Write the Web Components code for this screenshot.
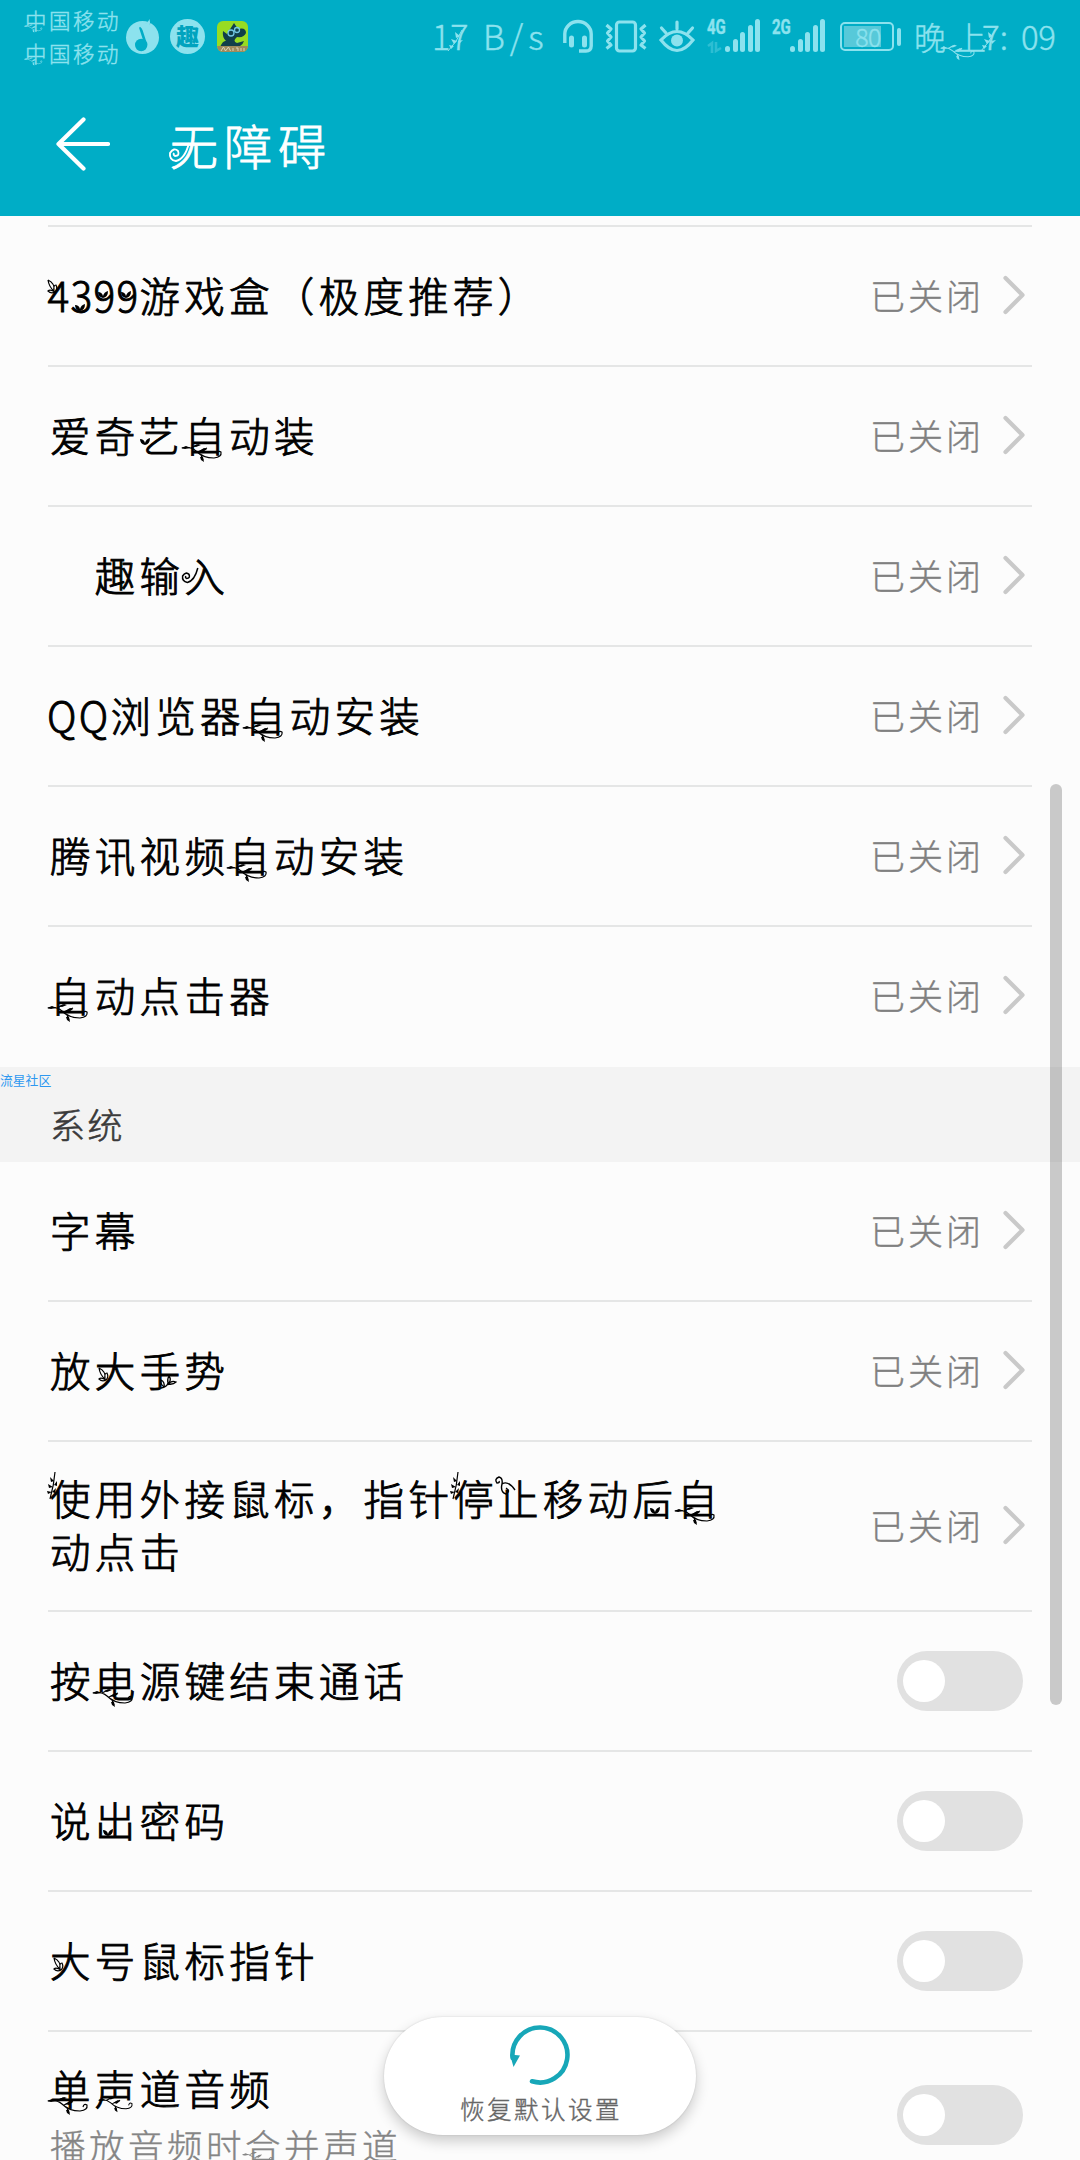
<!DOCTYPE html>
<html lang="zh-CN">
<head>
<meta charset="utf-8">
<title>无障碍</title>
<style>
html,body{margin:0;padding:0;background:#fcfcfc}
body{font-family:"Noto Sans CJK SC","Noto Sans",sans-serif;font-weight:300;width:1080px;height:2160px;overflow:hidden}
</style>
</head>
<body>
<access-page></access-page>
<script>
function define(name, html, setup) {
  const t = document.createElement('template');
  t.innerHTML = html;
  customElements.define(name, class extends HTMLElement {
    constructor() {
      super();
      this.attachShadow({mode: 'open'}).appendChild(t.content.cloneNode(true));
    }
    connectedCallback() { if (setup) setup(this, this.shadowRoot); }
  });
}

/* Small botanical ornaments that hang on single characters. */
const sprigs = {
  vine: ['left:-3px;top:38px;width:42px;height:19px', '0 0 42 19',
    '<path d="M1 5Q9 3 15 8Q22 15 33 15Q41 14 40 9Q37 7 36 11M10 5L16 2M17 9L26 5M20 12L22 17" fill="none" stroke="currentColor" stroke-width="1.200"/><path d="M0 5l5-2 4 2-5 1zM12 3l5-2 3 1-5 2zM18 8l5-3 3 1-4 3zM19 14l3 0 1 5-3-2z" fill="currentColor"/>'],
  leaf: ['left:-1px;top:14px;width:11px;height:15px', '0 0 11 15',
    '<path d="M1 1Q8 4 7 12Q2 8 1 1M7 12Q6 6 9 6Q11 10 8 13Q4 15 1 12Q3 10 8 13" fill="none" stroke="currentColor" stroke-width="1.200"/>'],
  bud: ['left:5px;bottom:14px;width:10px;height:8px', '0 0 10 8',
    '<path d="M5 8Q0 7 0 2Q4 2 5 6Q6 2 10 1Q10 7 5 8" fill="currentColor"/>'],
  fern: ['left:-4px;top:4px;width:12px;height:28px', '0 0 12 28',
    '<path d="M9 0Q8 13 4 27" fill="none" stroke="currentColor" stroke-width="1.200"/><path d="M8 9l-4-4 1 5zM7 15l-5-3 1 4zM6 20l-5-1 1 3zM8 13l3-4 0 5zM6 20l4-4-1 5z" fill="currentColor"/>'],
  curl: ['left:-4px;top:8px;width:22px;height:20px', '0 0 22 20',
    '<path d="M21 14Q14 4 8 8Q6 16 12 18Q17 15 12 12M8 8Q9 2 5 1Q0 3 3 7Q6 7 5 5" fill="none" stroke="currentColor" stroke-width="1.400"/>'],
  swirl: ['left:-2px;top:34px;width:22px;height:20px', '0 0 22 20',
    '<path d="M21 0Q17 16 8 18Q1 17 2 10Q6 4 10 8Q12 13 7 13Q5 12 6 10" fill="none" stroke="currentColor" stroke-width="1.900"/>'],
  branch: ['left:-1px;top:12px;width:15px;height:24px', '0 0 15 24',
    '<path d="M14 2Q9 14 0 23" fill="none" stroke="currentColor" stroke-width="1"/><path d="M12 8l-5-4 1 6zM9 13l-6-2 3 5zM6 18l-5-1 2 4zM10 13l5-1-4 4z" fill="currentColor"/>'],
  twig: ['left:20px;top:35px;width:16px;height:14px', '0 0 16 14',
    '<path d="M1 13Q7 12 8 8Q7 4 9 1Q12 5 8 9Q13 10 16 7Q11 5 8 10M4 12Q0 9 1 5Q5 7 4 12" fill="none" stroke="currentColor" stroke-width="1.300"/>']
};
define('ink-sprig', `<style>:host{position:relative;display:inline}svg{position:absolute;overflow:visible}</style><slot></slot><svg></svg>`, (el, r) => {
  const [css, box, body] = sprigs[el.getAttribute('kind')];
  const s = r.querySelector('svg');
  s.style.cssText = css;
  if (el.hasAttribute('scale')) { s.style.transform = 'scale(' + el.getAttribute('scale') + ')'; s.style.transformOrigin = '0 0'; }
  if (el.hasAttribute('top')) { s.style.bottom = 'auto'; s.style.top = el.getAttribute('top') + 'px'; }
  if (el.hasAttribute('left')) s.style.left = el.getAttribute('left') + 'px';
  s.setAttribute('viewBox', box);
  s.innerHTML = body;
});

define('signal-bars', `<style>
:host{display:flex;align-items:flex-end;gap:2.5px;height:33px}
i{width:5px;border-radius:2.5px;background:currentColor}
</style><i style="height:6px"></i><i style="height:13px"></i><i style="height:20px"></i><i style="height:27px"></i><i style="height:33px"></i>`);

define('battery-meter', `<style>
:host{display:flex;align-items:center;gap:3px}
.b{box-sizing:border-box;width:54px;height:29px;border:2px solid currentColor;border-radius:5px;padding:2px}
.f{width:37px;height:21px;background:rgba(255,255,255,.34);font-size:25px;line-height:20px;text-align:right;letter-spacing:-.5px}
.c{width:4px;height:18px;border-radius:2px;background:currentColor}
</style><div class="b"><div class="f"><slot></slot></div></div><div class="c"></div>`);

define('status-bar', `<style>
:host{display:flex;align-items:flex-start;height:72px;color:#8ce2ee;white-space:nowrap;-webkit-text-stroke:.4px currentColor}
.car{margin:3px 0 0 25px;width:101px;font-size:21.500px;letter-spacing:2.500px;line-height:33px}
svg{flex:none;display:block;overflow:visible}
.t{font-size:34px;line-height:36px;margin-top:18px}
.g{font:bold 20px/16px Roboto,sans-serif;display:flex;flex-direction:column;width:18px;margin-top:19px}
.g span{transform:scaleX(.75);transform-origin:0 0}
.g svg{margin-top:7px;opacity:.32}
</style>
<div class="car"><div><ink-sprig kind="vine" scale=".45" top="20" left="-1">中</ink-sprig>国移动</div><div><ink-sprig kind="vine" scale=".45" top="20" left="-1">中</ink-sprig>国移动</div></div>
<svg style="margin:19px 0 0 0" width="33" height="36" viewBox="0 0 33 36"><circle cx="16.500" cy="18.500" r="16.500" fill="currentColor"/><path d="M24.500 2Q22 6 14.500 9L20 26" fill="none" stroke="#00adc6" stroke-width="2.600" stroke-linejoin="round"/><path d="M13 6.500Q22 5 23.500 0Q26 8 17 11z" fill="currentColor"/><circle cx="15.200" cy="26" r="6.200" fill="#00adc6"/></svg>
<svg style="margin:19px 0 0 11px" width="35" height="35" viewBox="0 0 35 35"><circle cx="17.500" cy="17.500" r="17.500" fill="currentColor"/><text x="17.500" y="26" text-anchor="middle" font-size="23" font-weight="900" stroke="none" fill="#00a3be">趣</text></svg>
<svg style="margin:21px 0 0 12px" width="31" height="31" viewBox="0 0 31 31"><rect width="31" height="31" rx="6" fill="#98dc22"/><path d="M3 26Q6 19 9 20Q5 16 6 10L10 13 17 2 21 8Q29 6 29 12Q27 17 20 16Q15 20 20 22L27 20Q25 26 18 26z" fill="#103f4a"/><g fill="none" stroke="#74c7e3" stroke-width="1.300"><circle cx="14" cy="12" r="3"/><circle cx="20" cy="9" r="2.500"/></g><path d="M0 25H31Q30 31 25 31H6Q1 31 0 25z" fill="#9f8a5c"/><path d="M4 30l2.500-4 2 4 3-4 2 4M16 27v3M19 27h2v3M24 27v3M27 27v3" fill="none" stroke="#e0d8c4" stroke-width=".9"/></svg>
<div class="t" style="margin-left:184px;width:51px"><span>1</span><ink-sprig kind="branch" left="-2" top="17">7</ink-sprig></div>
<div class="t" style="width:80px;letter-spacing:5px">B/s</div>
<svg style="margin:20px 0 0 0" width="30" height="33" viewBox="0 0 30 33" fill="none" stroke="currentColor"><path d="M1.800 23V14A13.200 12.500 0 0 1 28.200 14V26Q28 31 23 31H16" stroke-width="3.400"/><path d="M8.500 18v7M21.500 18v7" stroke-width="5" stroke-linecap="round"/></svg>
<svg style="margin:20px 0 0 12px" width="42" height="33" viewBox="0 0 42 33" fill="none" stroke="currentColor" stroke-width="3.200" stroke-linejoin="round"><rect x="11.500" y="2" width="19" height="29" rx="3"/><path d="M1.500 5l4.500 4-3.500 4 3.500 4-3.500 4 3.500 4-4.500 3.500M40.500 5L36 9l3.500 4-3.500 4 3.500 4-3.500 4 4.500 3.500"/></svg>
<svg style="margin:20px 0 0 12px" width="36" height="33" viewBox="0 0 36 33" fill="none" stroke="currentColor" stroke-width="3.200" stroke-linecap="round"><path d="M2 20Q18 3 34 20Q18 41 2 20zM18 9V2M7 13L2.500 8M29 13L33.500 8"/><circle cx="18" cy="20.500" r="6" fill="currentColor" stroke="none"/></svg>
<div class="g" style="margin-left:12px"><span>4G</span><svg width="15" height="11" viewBox="0 0 15 11" fill="none" stroke="currentColor" stroke-width="2.600"><path d="M1 4l4-3v10M9 0v9l5-3"/></svg></div>
<signal-bars style="margin-top:19px"></signal-bars>
<div class="g" style="margin-left:12px"><span>2G</span></div>
<signal-bars style="margin-top:19px"></signal-bars>
<battery-meter style="margin:22px 0 0 15px">80</battery-meter>
<div class="t" style="margin-left:13px;width:40px;font-size:32px">晚</div>
<div class="t" style="width:28px;font-size:32px"><ink-sprig kind="vine" top="31" left="-14" scale=".85">上</ink-sprig></div>
<div class="t" style="width:39px;font-size:33px"><ink-sprig kind="branch" top="16">7</ink-sprig>:</div>
<div class="t" style="font-size:33px;letter-spacing:-.3px">09</div>`);

define('app-header', `<style>
:host{display:flex;flex-direction:column;height:216px;background:#00adc6;color:#fff}
.bar{display:flex;align-items:center;height:144px}
svg{margin-left:56px}
h1{margin:0 0 0 60px;font-size:48px;font-weight:300;line-height:60px;letter-spacing:6px;-webkit-text-stroke:.9px #fff}
</style><status-bar></status-bar>
<div class="bar"><svg width="54" height="54" viewBox="0 0 54 54" fill="none" stroke="#fff" stroke-width="4.200" stroke-linecap="round" stroke-linejoin="round"><path d="M52 27H2.500M27.500 2.500L2.500 27L27.500 51.500"/></svg><h1><slot></slot></h1></div>`);

define('toggle-switch', `<style>
:host{display:flex;align-items:center;box-sizing:border-box;width:126px;height:60px;border-radius:30px;background:#e1e1e1;padding-left:6px;margin-right:9px}
i{width:42px;height:42px;border-radius:50%;background:#fff}
</style><i></i>`);

define('status-link', `<style>
:host{display:flex;align-items:center;color:#808080;font-size:35px;letter-spacing:3px;line-height:40px;-webkit-text-stroke:.4px currentColor}
span{width:133px;margin-top:-2px}
svg{margin:-2px 7px 0 0}
</style><span>已关闭</span><svg width="22" height="40" viewBox="0 0 22 40" fill="none" stroke="#c9c9c9" stroke-width="4.200" stroke-linecap="round" stroke-linejoin="round"><path d="M2.500 3L19.500 20L2.500 37"/></svg>`);

define('setting-row', `<style>
:host{display:flex;align-items:center;justify-content:space-between;box-sizing:border-box;height:140px;margin:0 48px;border-bottom:2px solid #e5e6e6;color:#000}
:host([tall]){height:170px}
:host([last]){border-bottom-color:transparent}
:host([detail]){height:170px;border:0;align-items:flex-start}
:host([detail]) .l{padding-top:33px}
:host([detail]) .r{margin-top:53px}
.l{font-size:40.500px;line-height:53px;letter-spacing:4.300px;padding-left:2px;margin-top:-4px;white-space:nowrap;-webkit-text-stroke:.9px currentColor}
::slotted([slot=sub]){display:block;font-size:35.500px;line-height:54px;letter-spacing:3.500px;color:#858585;margin-top:4px;-webkit-text-stroke:.4px currentColor}
</style><div class="l"><slot></slot><slot name="sub"></slot></div><div class="r"></div>`, (el, r) => {
  r.querySelector('.r').innerHTML = el.hasAttribute('toggle') ? '<toggle-switch></toggle-switch>' : '<status-link></status-link>';
});

define('section-head', `<style>
:host{display:flex;flex-direction:column;height:95px;background:#f3f3f3}
.w{font-size:12.800px;line-height:16px;margin-top:5px;color:#2d98f0;font-weight:400}
.s{font-size:35px;line-height:40px;letter-spacing:2.500px;margin:16px 0 0 50px;color:#3a3a3a;-webkit-text-stroke:.6px currentColor}
</style><div class="w">流星社区</div><div class="s"><slot></slot></div>`);

define('reset-button', `<style>
:host{position:absolute;left:384px;top:2017px;width:312px;height:118px;border-radius:59px;background:#fff;box-shadow:0 6px 14px rgba(0,0,0,.2),0 0 2px rgba(0,0,0,.14);display:flex;flex-direction:column;align-items:center;color:#666}
svg{flex:none;margin-top:8px}
span{font-size:24.500px;line-height:30px;letter-spacing:2.500px;margin:9px 0 0 2px;-webkit-text-stroke:.4px currentColor}
</style><svg width="60" height="60" viewBox="0 0 60 60"><path d="M2.600 33A27.500 27.500 0 1 1 22 56.300" fill="none" stroke="#17a7b8" stroke-width="4.600" stroke-linecap="round"/><path d="M0 29.500L10 30.500L3.500 42z" fill="#17a7b8"/></svg><span><slot></slot></span>`);

define('access-page', `<style>
:host{display:block;position:relative;width:1080px;height:2160px;overflow:hidden;background:#fcfcfc}
.top{height:9px;margin:0 48px;border-bottom:2px solid #e5e6e6}
.scroll{position:absolute;left:1050px;top:784px;width:12px;height:921px;border-radius:6px;background:rgba(0,0,0,.2)}
.n{letter-spacing:.1px;margin-left:-2.500px;letter-spacing:1.300px}
.q{letter-spacing:2.300px;margin-left:-3px}
</style>
<app-header><ink-sprig kind="swirl">无</ink-sprig>障碍</app-header>
<main>
<div class="top"></div>
<setting-row><span class="n"><ink-sprig kind="leaf">4</ink-sprig><ink-sprig kind="bud" top="38">3</ink-sprig><ink-sprig kind="bud" top="25">9</ink-sprig><ink-sprig kind="bud" top="25">9</ink-sprig></span>游戏盒（极度推荐）</setting-row>
<setting-row>爱奇<ink-sprig kind="bud" left="0" top="32">艺</ink-sprig><ink-sprig kind="vine">自</ink-sprig>动装</setting-row>
<setting-row>　趣输<ink-sprig kind="swirl" top="23" left="-3" scale=".8">入</ink-sprig></setting-row>
<setting-row><span class="q">QQ</span>浏览器<ink-sprig kind="vine">自</ink-sprig>动安装</setting-row>
<setting-row>腾讯视频<ink-sprig kind="vine">自</ink-sprig>动安装</setting-row>
<setting-row last><ink-sprig kind="vine">自</ink-sprig>动点击器</setting-row>
<section-head>系统</section-head>
<setting-row>字幕</setting-row>
<setting-row>放<ink-sprig kind="leaf" top="27" left="3">大</ink-sprig><ink-sprig kind="twig">手</ink-sprig>势</setting-row>
<setting-row tall><ink-sprig kind="fern">使</ink-sprig>用外接鼠标，指针<ink-sprig kind="fern">停</ink-sprig><ink-sprig kind="curl">止</ink-sprig>移动<ink-sprig kind="bud" left="18" top="38">后</ink-sprig><ink-sprig kind="vine">自</ink-sprig><br>动点击</setting-row>
<setting-row toggle>按<ink-sprig kind="vine">电</ink-sprig>源键结束通话</setting-row>
<setting-row toggle>说<ink-sprig kind="bud" left="8" top="38">出</ink-sprig>密码</setting-row>
<setting-row toggle><ink-sprig kind="leaf" top="27" left="3">大</ink-sprig>号鼠标指针</setting-row>
<setting-row toggle detail><ink-sprig kind="vine">单</ink-sprig><ink-sprig kind="vine" top="38" left="3" scale=".85">声</ink-sprig>道音频<span slot="sub">播放音频时<ink-sprig kind="vine" top="32" scale=".75">合</ink-sprig>并声道</span></setting-row>
</main>
<div class="scroll"></div>
<reset-button>恢复默认设置</reset-button>`);
</script>
</body>
</html>
